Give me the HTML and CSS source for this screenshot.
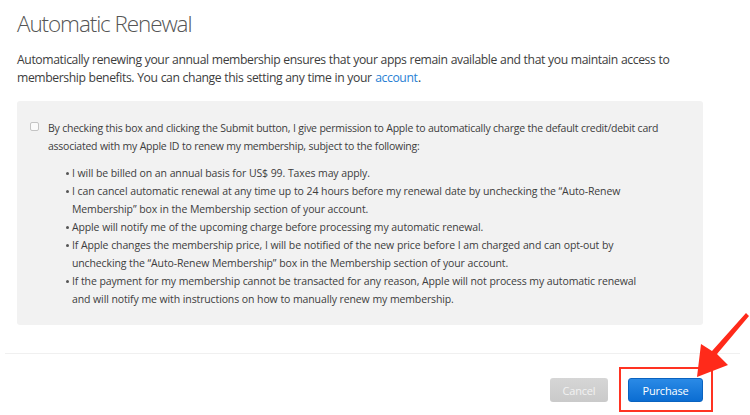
FILE: index.html
```html
<!DOCTYPE html>
<html>
<head>
<meta charset="utf-8">
<link rel="stylesheet" href="styles.css">
</head>
<body>
<div class="page">
  <h1 class="title">Automatic Renewal</h1>
  <p class="intro"><span class="intro-line">Automatically renewing your annual membership ensures that your apps remain available and that you maintain access to</span> <span class="intro-line">membership benefits. You can change this setting any time in your <a class="link" href="#">account</a>.</span></p>
  <div class="terms">
    <div class="consent">
      <span class="checkbox"></span>
      <p class="consent-text">By checking this box and clicking the Submit button, I give permission to Apple to automatically charge the default credit/debit card associated with my Apple ID to renew my membership, subject to the following:</p>
    </div>
    <ul class="points">
      <li>I will be billed on an annual basis for US$ 99. Taxes may apply.</li>
      <li>I can cancel automatic renewal at any time up to 24 hours before my renewal date by unchecking the “Auto-Renew Membership” box in the Membership section of your account.</li>
      <li>Apple will notify me of the upcoming charge before processing my automatic renewal.</li>
      <li>If Apple changes the membership price, I will be notified of the new price before I am charged and can opt-out by unchecking the “Auto-Renew Membership” box in the Membership section of your account.</li>
      <li>If the payment for my membership cannot be transacted for any reason, Apple will not process my automatic renewal and will notify me with instructions on how to manually renew my membership.</li>
    </ul>
  </div>
  <div class="divider"></div>
  <div class="actions">
    <button class="btn btn-cancel">Cancel</button>
    <button class="btn btn-primary">Purchase</button>
  </div>
</div>
<div class="highlight"></div>
<svg class="arrow" width="70" height="70" viewBox="0 0 70 70">
  <path d="M66 3 L69 6 L37 44 L48 55 L17 67 L21 34 L32 41 Z" fill="#ff2a1a"/>
</svg>
</body>
</html>
```
FILE: styles.css
```css
html, body {
  margin: 0;
  padding: 0;
  background: #ffffff;
}
body {
  width: 750px;
  height: 415px;
  overflow: hidden;
  position: relative;
  font-family: "Open Sans", "Noto Sans", sans-serif;
  color: #3a3a3a;
}
.page {
  padding: 0 0 0 17px;
}
.title {
  margin: 0;
  padding-top: 10px;
  font-size: 22.5px;
  line-height: 28px;
  font-weight: 300;
  color: #555555;
  letter-spacing: -1.1px;
}
.intro {
  margin: 13px 0 0 0;
  width: 660px;
  font-size: 12.2px;
  line-height: 18px;
  color: #3d3d3d;
  letter-spacing: -0.4px;
  word-spacing: 0.3px;
}
.intro-line {
  display: block;
}
.link {
  color: #2a7fd4;
  text-decoration: none;
  padding: 0 0.5px;
}
.terms {
  margin-top: 14px;
  width: 686px;
  box-sizing: border-box;
  background: #f2f2f2;
  border-radius: 3px;
  padding: 18px 42px 17px 13px;
  font-size: 10.5px;
  line-height: 18px;
  color: #3d3d3d;
  letter-spacing: -0.25px;
  word-spacing: 0.2px;
}
.consent {
  display: flex;
  align-items: flex-start;
  gap: 9px;
}
.checkbox {
  flex: none;
  width: 7px;
  height: 7px;
  margin-top: 3px;
  border: 1px solid #c4c4c4;
  border-radius: 2px;
  background: #fbfbfb;
}
.consent-text {
  margin: 0;
}
.points {
  margin: 9px 10px 0 0;
  padding: 0 0 0 36px;
  list-style: none;
  letter-spacing: -0.13px;
}
.points li {
  position: relative;
  padding-left: 6px;
}
.points li::before {
  content: "";
  position: absolute;
  left: 0;
  top: 8px;
  width: 3px;
  height: 3px;
  border-radius: 50%;
  background: #555;
}
.divider {
  margin: 28px 0 0 -12px;
  width: 735px;
  height: 1px;
  background: #f0f0f0;
}
.actions {
  display: flex;
  justify-content: flex-end;
  gap: 20px;
  width: 686px;
  margin-top: 24px;
}
.btn {
  height: 24px;
  border: none;
  border-radius: 3px;
  font-family: "Open Sans", "Noto Sans", sans-serif;
  font-size: 11px;
  letter-spacing: -0.2px;
  color: #ffffff;
  padding: 0;
}
.btn-cancel {
  width: 58px;
  background: linear-gradient(#d6d6d6, #cacaca);
  color: #f2f2f2;
}
.btn-primary {
  width: 75px;
  background: linear-gradient(#2a8ae6, #0b6dd2);
  border: 1px solid #0a63c0;
}
.highlight {
  position: absolute;
  left: 619px;
  top: 367px;
  width: 90px;
  height: 41px;
  border: 2px solid #ff3322;
}
.arrow {
  position: absolute;
  left: 680px;
  top: 310px;
}
```
